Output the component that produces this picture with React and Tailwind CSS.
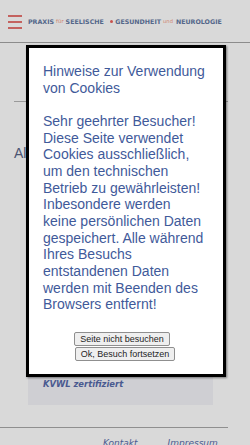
import React from 'react';

const Header = () => (
  <div className="flex h-[43px] items-center gap-[6px] border-b border-[#8c8c8c] pl-[8px]">
    <div className="mt-[2px] flex w-[14px] flex-col gap-[4.3px]">
      <div className="h-[1.7px] bg-[#c4625f]" />
      <div className="h-[1.7px] bg-[#c4625f]" />
      <div className="h-[1.7px] bg-[#c4625f]" />
    </div>
    <div className="mt-[1px] flex items-center whitespace-nowrap font-['DejaVu_Sans',sans-serif] text-[6.3px] font-bold text-[#54678a]">
      <span>PRAXIS</span>
      <span className="ml-[2px] text-[5.4px] font-normal text-[#d0836f]">für</span>
      <span className="ml-[2px]">SEELISCHE</span>
      <span className="ml-[6px] h-[3.4px] w-[3.4px] rounded-full bg-[#c8524d]" />
      <span className="ml-[2px]">GESUNDHEIT</span>
      <span className="ml-[2px] text-[5.2px] font-normal text-[#d0836f]">und</span>
      <span className="ml-[3px]">NEUROLOGIE</span>
    </div>
  </div>
);

const CookieDialog = () => (
  <div className="absolute left-[26px] top-[45px] w-[200px] border-[3px] border-black bg-white pb-[13px] pl-[14px] pr-[16px] pt-[15px] shadow-[1px_1px_2px_rgba(0,0,0,0.45)]">
    <div className="font-['Liberation_Sans',Arial,sans-serif] text-[14px] leading-[16.65px] text-[#3f5a9a]">
      Hinweise zur Verwendung von Cookies
      <br />
      <br />
      Sehr geehrter Besucher! Diese Seite verwendet Cookies ausschließlich, um den technischen Betrieb zu
      gewährleisten! Inbesondere werden keine persönlichen Daten gespeichert. Alle während Ihres Besuchs
      entstandenen Daten werden mit Beenden des Browsers entfernt!
    </div>
    <div className="mt-[19px] flex flex-col items-center gap-[1px] font-['Liberation_Sans',Arial,sans-serif] text-[9px] leading-[10px] text-[#1e1e1e]">
      <button className="mr-[6px] rounded-[2px] border border-[#8f8f8f] bg-[#efefef] px-[5px] py-[1px]">
        Seite nicht besuchen
      </button>
      <button className="rounded-[2px] border border-[#8f8f8f] bg-[#efefef] px-[5px] py-[1px]">
        Ok, Besuch fortsetzen
      </button>
    </div>
  </div>
);

const App = () => {
  return (
    <div className="relative h-[445px] w-[250px] overflow-hidden bg-[#d9d9d9]">
      <Header />
      <div className="w-[228px] pl-[14px]">
        <div className="mt-[58px] h-px bg-[#9a9a9a]" />
        <h2 className="mt-[43px] font-['Liberation_Sans',Arial,sans-serif] text-[14px] leading-[16px] text-[#4b5472]">
          Allgemeines
        </h2>
        <div className="ml-[14px] mt-[14px] flex h-[230px] w-[185px] flex-col justify-end bg-[#cfcfd3] pb-[16px] pl-[15px]">
          <span className="font-['DejaVu_Sans',sans-serif] text-[8.4px] font-bold italic leading-[10px] text-[#4a5a90]">
            KVWL zertifiziert
          </span>
        </div>
      </div>
      <div className="mt-[22px] h-px w-[228px] bg-[#8f8f8f]" />
      <div className="flex gap-[30px] pl-[103px] pt-[10px] font-['DejaVu_Sans',sans-serif] text-[9px] italic leading-[11px] text-[#4a5a90]">
        <span>Kontakt</span>
        <span>Impressum</span>
      </div>
      <CookieDialog />
    </div>
  );
};

export default App;
